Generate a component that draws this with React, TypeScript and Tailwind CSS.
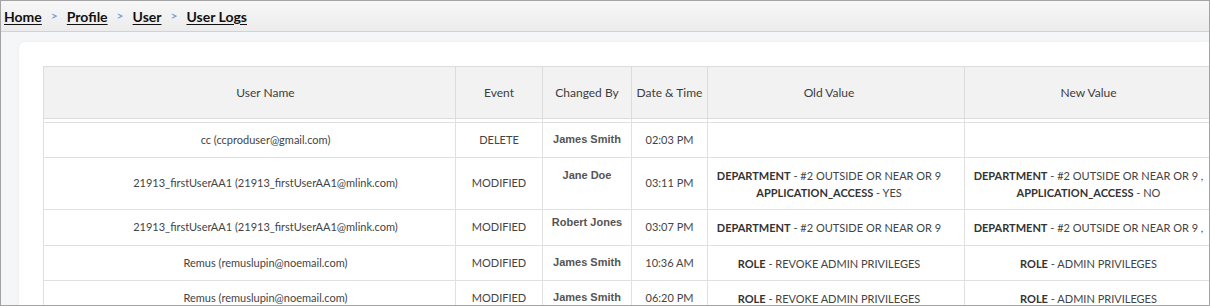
import React from "react";

type Row = {
  user: string;
  event: string;
  by: string;
  time: string;
  oldVal: React.ReactNode;
  newVal: React.ReactNode;
  h: string;
  byPad: string;
};

const Kv = ({ k, v }: { k: string; v: string }) => (
  <>
    <span className="font-bold text-[#333]">{k}</span> - {v}
  </>
);

const rows: Row[] = [
  {
    user: "cc (ccproduser@gmail.com)",
    event: "DELETE",
    by: "James Smith",
    time: "02:03 PM",
    oldVal: null,
    newVal: null,
    h: "h-[35px]",
    byPad: "pb-[1px]",
  },
  {
    user: "21913_firstUserAA1 (21913_firstUserAA1@mlink.com)",
    event: "MODIFIED",
    by: "Jane Doe",
    time: "03:11 PM",
    oldVal: (
      <>
        <Kv k="DEPARTMENT" v="#2 OUTSIDE OR NEAR OR 9" />
        <br />
        <Kv k="APPLICATION_ACCESS" v="YES" />
      </>
    ),
    newVal: (
      <>
        <Kv k="DEPARTMENT" v="#2 OUTSIDE OR NEAR OR 9 ," />
        <br />
        <Kv k="APPLICATION_ACCESS" v="NO" />
      </>
    ),
    h: "h-[52px]",
    byPad: "pb-[16px]",
  },
  {
    user: "21913_firstUserAA1 (21913_firstUserAA1@mlink.com)",
    event: "MODIFIED",
    by: "Robert Jones",
    time: "03:07 PM",
    oldVal: <Kv k="DEPARTMENT" v="#2 OUTSIDE OR NEAR OR 9" />,
    newVal: <Kv k="DEPARTMENT" v="#2 OUTSIDE OR NEAR OR 9 ," />,
    h: "h-[36px]",
    byPad: "pb-[10px]",
  },
  {
    user: "Remus (remuslupin@noemail.com)",
    event: "MODIFIED",
    by: "James Smith",
    time: "10:36 AM",
    oldVal: <Kv k="ROLE" v="REVOKE ADMIN PRIVILEGES" />,
    newVal: <Kv k="ROLE" v="ADMIN PRIVILEGES" />,
    h: "h-[35px]",
    byPad: "pb-[1px]",
  },
  {
    user: "Remus (remuslupin@noemail.com)",
    event: "MODIFIED",
    by: "James Smith",
    time: "06:20 PM",
    oldVal: <Kv k="ROLE" v="REVOKE ADMIN PRIVILEGES" />,
    newVal: <Kv k="ROLE" v="ADMIN PRIVILEGES" />,
    h: "h-[35px]",
    byPad: "pb-[1px]",
  },
];

const crumbs = ["Home", "Profile", "User", "User Logs"];
const heads = ["User Name", "Event", "Changed By", "Date & Time", "Old Value", "New Value"];
// per-column padding, the first and fifth columns sit off-centre in the original
const colPad = ["pl-[32px]", "", "", "", "pr-[14px]", ""];

export default function App() {
  return (
    <div className="w-[1210px] h-[306px] overflow-hidden border border-[#a3a3a3] bg-[#f5f6f8] font-['Lato','Liberation_Sans',sans-serif]">
      {/* breadcrumb */}
      <div className="h-[31px] flex items-center px-[3px] bg-gradient-to-b from-[#f7f7f7] to-[#ececec] border-b border-[#d2d2d2]">
        {crumbs.map((c, i) => (
          <React.Fragment key={c}>
            {i > 0 && <span className="mx-[9px] text-[12px] font-bold text-[#7ea2d6]">&gt;</span>}
            <a className="text-[14px] font-bold text-[#111] underline underline-offset-2 decoration-1">{c}</a>
          </React.Fragment>
        ))}
      </div>

      <div className="pl-[18px] pt-[10px]">
        <div className="bg-white rounded-tl-[6px] pl-[24px] pt-[24px] shadow-[0_0_4px_rgba(0,0,0,0.04)]">
          <table className="table-fixed border-collapse w-[1169px] text-[11px] text-[#444]">
            <colgroup>
              <col className="w-[412px]" />
              <col className="w-[87px]" />
              <col className="w-[89px]" />
              <col className="w-[76px]" />
              <col className="w-[257px]" />
              <col className="w-[248px]" />
            </colgroup>
            <thead>
              <tr className="h-[52px] bg-[#f2f2f2] text-[12px] text-[#3d3d3d]">
                {heads.map((h, i) => (
                  <th key={h} className={`border border-[#dcdcdc] font-normal text-center ${colPad[i]}`}>
                    {h}
                  </th>
                ))}
              </tr>
            </thead>
            <tbody>
              <tr className="h-[4px]">
                {heads.map((h) => (
                  <td key={h} className="border border-[#e0e0e0] p-0" />
                ))}
              </tr>
              {rows.map((r, i) => (
                <tr key={i} className={`${r.h} text-center`}>
                  <td className={`border border-[#e0e0e0] ${colPad[0]}`}>{r.user}</td>
                  <td className="border border-[#e0e0e0]">{r.event}</td>
                  <td className={`border border-[#e0e0e0] font-['Liberation_Sans',Arial,sans-serif] font-bold text-[#555] ${r.byPad}`}>
                    {r.by}
                  </td>
                  <td className="border border-[#e0e0e0]">{r.time}</td>
                  <td className={`border border-[#e0e0e0] leading-[17px] ${colPad[4]}`}>{r.oldVal}</td>
                  <td className="border border-[#e0e0e0] leading-[17px]">{r.newVal}</td>
                </tr>
              ))}
            </tbody>
          </table>
        </div>
      </div>
    </div>
  );
}
